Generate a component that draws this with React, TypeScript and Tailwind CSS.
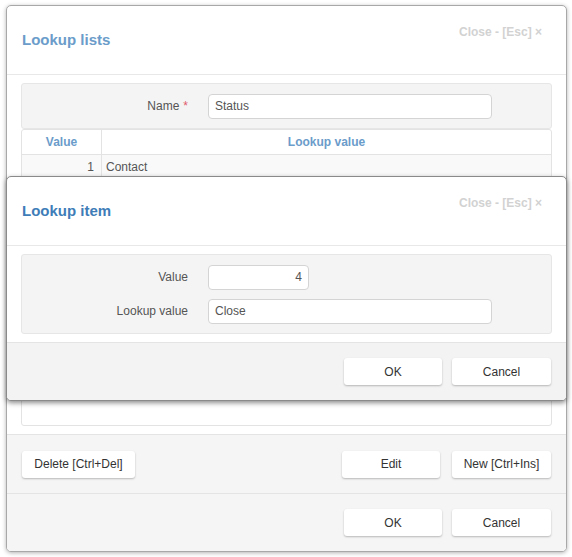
import React from 'react';

const Btn: React.FC<{ label: string; className?: string }> = ({ label, className = '' }) => (
  <button
    className={`h-[27px] rounded-[3px] bg-white text-[12px] text-[#333] shadow-[0_1px_2px_rgba(0,0,0,0.25)] ${className}`}
  >
    {label}
  </button>
);

const CloseLink: React.FC = () => (
  <span className="absolute right-[24px] top-[17px] text-[12px] font-bold text-[#d2d2d2]">Close - [Esc] ×</span>
);

const Field: React.FC<{ label: string; required?: boolean; children: React.ReactNode }> = ({ label, required, children }) => (
  <div className="flex items-center">
    <div className="w-[166px] text-right text-[12px] text-[#555]">
      {label}
      {required && <span className="ml-[4px] text-[#e05a6a]">*</span>}
    </div>
    <div className="ml-[20px]">{children}</div>
  </div>
);

const Input: React.FC<{ value: string; className?: string }> = ({ value, className = '' }) => (
  <div
    className={`flex h-[25px] items-center rounded-[4px] border border-[#d4d4d4] bg-white px-[6px] text-[12px] text-[#555] ${className}`}
  >
    {value}
  </div>
);

export default function App() {
  return (
    <div className="relative h-[557px] w-[572px] bg-white pl-[6px] pt-[5px]" style={{ fontFamily: '"Liberation Sans", Arial, sans-serif' }}>
      {/* Lookup lists dialog */}
      <div className="flex h-[547px] w-[561px] flex-col overflow-hidden rounded-[5px] border border-[#a8a8a8] bg-white shadow-[0_1px_4px_rgba(0,0,0,0.3)]">
        <div className="relative flex h-[69px] shrink-0 items-center border-b border-[#e8e8e8] pl-[15px]">
          <h2 className="text-[15px] font-bold text-[#6b9cca]">Lookup lists</h2>
          <CloseLink />
        </div>
        <div className="flex min-h-0 flex-1 flex-col px-[14px] py-[8px]">
          <div className="flex h-[46px] shrink-0 items-center rounded-[3px] border border-[#e6e6e6] bg-[#f4f4f4]">
            <Field label="Name" required>
              <Input value="Status" className="w-[284px]" />
            </Field>
          </div>
          <div className="min-h-0 flex-1 rounded-[3px] border border-[#e3e3e3] bg-white">
            <div className="flex h-[25px] border-b border-[#e3e3e3] text-[12px] font-bold text-[#6b9cca]">
              <div className="flex w-[80px] items-center justify-center border-r border-[#e3e3e3]">Value</div>
              <div className="flex flex-1 items-center justify-center">Lookup value</div>
            </div>
            <div className="flex h-[23px] bg-[#f9f9f9] text-[12px] text-[#555]">
              <div className="flex w-[80px] items-center justify-end border-r border-[#e3e3e3] pr-[7px]">1</div>
              <div className="flex flex-1 items-center pl-[4px]">Contact</div>
            </div>
          </div>
        </div>
        <div className="flex h-[59px] shrink-0 items-center border-t border-[#e4e4e4] bg-[#f5f5f5] px-[15px]">
          <Btn label="Delete [Ctrl+Del]" className="w-[113px]" />
          <div className="flex-1" />
          <Btn label="Edit" className="w-[98px]" />
          <Btn label="New [Ctrl+Ins]" className="ml-[12px] w-[99px]" />
        </div>
        <div className="flex h-[58px] shrink-0 items-center justify-end gap-[10px] border-t border-[#e4e4e4] bg-[#f5f5f5] px-[15px]">
          <Btn label="OK" className="w-[98px]" />
          <Btn label="Cancel" className="w-[99px]" />
        </div>
      </div>

      {/* Lookup item dialog (overlay) */}
      <div className="absolute left-[6px] top-[176px] flex h-[225px] w-[561px] flex-col overflow-hidden rounded-[5px] border border-[#8a8a8a] bg-white shadow-[0_2px_5px_rgba(0,0,0,0.45)]">
        <div className="relative flex h-[69px] shrink-0 items-center border-b border-[#e8e8e8] pl-[15px]">
          <h2 className="text-[15px] font-bold text-[#3f7db8]">Lookup item</h2>
          <CloseLink />
        </div>
        <div className="px-[14px] py-[8px]">
          <div className="flex h-[80px] flex-col justify-center gap-[9px] rounded-[3px] border border-[#e6e6e6] bg-[#f4f4f4]">
            <Field label="Value">
              <Input value="4" className="w-[101px] justify-end" />
            </Field>
            <Field label="Lookup value">
              <Input value="Close" className="w-[284px]" />
            </Field>
          </div>
        </div>
        <div className="flex flex-1 items-center justify-end gap-[10px] border-t border-[#e4e4e4] bg-[#f3f3f3] px-[15px]">
          <Btn label="OK" className="w-[98px]" />
          <Btn label="Cancel" className="w-[99px]" />
        </div>
      </div>
    </div>
  );
}
